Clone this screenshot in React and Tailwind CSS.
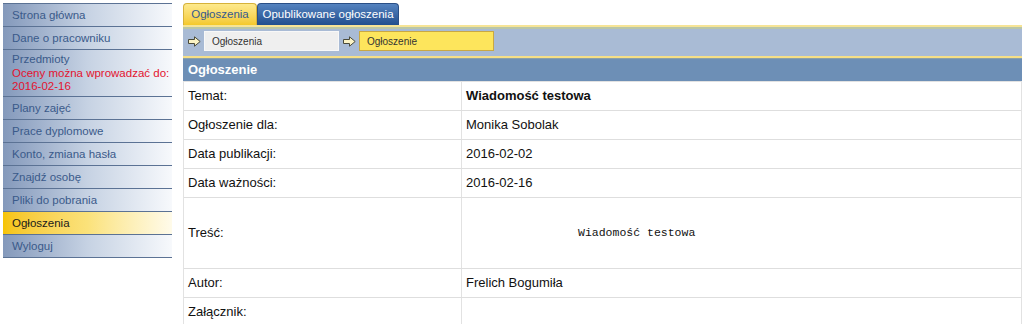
import React from "react";

const menu = [
  { label: "Strona główna" },
  { label: "Dane o pracowniku" },
  { label: "Przedmioty", extra: ["Oceny można wprowadzać do:", "2016-02-16"] },
  { label: "Plany zajęć" },
  { label: "Prace dyplomowe" },
  { label: "Konto, zmiana hasła" },
  { label: "Znajdź osobę" },
  { label: "Pliki do pobrania" },
  { label: "Ogłoszenia", active: true },
  { label: "Wyloguj" },
];

const rows = [
  { label: "Temat:", value: "Wiadomość testowa", bold: true },
  { label: "Ogłoszenie dla:", value: "Monika Sobolak" },
  { label: "Data publikacji:", value: "2016-02-02" },
  { label: "Data ważności:", value: "2016-02-16" },
  { label: "Treść:", value: "Wiadomość testowa", mono: true },
  { label: "Autor:", value: "Frelich Bogumiła" },
  { label: "Załącznik:", value: "" },
];

function Arrow() {
  return (
    <svg width="13" height="11" viewBox="0 0 13 11" className="shrink-0">
      <path
        d="M0.5 3.5 H6.5 V0.8 L12.2 5.5 L6.5 10.2 V7.5 H0.5 Z"
        fill="#fbf3c4"
        stroke="#4a4a3a"
        strokeWidth="1"
        strokeLinejoin="round"
      />
    </svg>
  );
}

export default function App() {
  return (
    <div className="flex w-[1024px] h-[324px] overflow-hidden bg-white font-['Liberation_Sans',Arial,sans-serif]">
      {/* sidebar */}
      <aside className="ml-[3px] mt-[3px] w-[169px] shrink-0 self-start border-t border-[#5b7294]">
        {menu.map((item) => (
          <div
            key={item.label}
            className={[
              "border-b border-[#5b7294] pl-[9px] text-[11.5px]",
              item.extra
                ? "h-[47px] pt-[3px] leading-[13.5px]"
                : "h-[23px] flex items-center leading-[14px]",
              item.active
                ? "bg-gradient-to-r from-[#f6c400] via-[#fbe27a] to-[#fffbea] text-[#1a1a1a]"
                : "bg-gradient-to-r from-[#8499bb] via-[#c6d2e3] to-[#f7f9fc] text-[#3a5a8a]",
            ].join(" ")}
          >
            <div>
              {item.label}
              {item.extra &&
                item.extra.map((t) => (
                  <div key={t} className="text-[#e3132f]">
                    {t}
                  </div>
                ))}
            </div>
          </div>
        ))}
      </aside>

      {/* main */}
      <main className="ml-[11px] mr-[2px] flex-1 pt-[3px]">
        {/* tabs */}
        <div className="flex h-[22px] items-end text-[11.5px]">
          <div className="h-[22px] w-[74px] rounded-t-[4px] border border-b-0 border-[#d6b23a] bg-gradient-to-b from-[#fde98c] to-[#f4c928] text-[#365a8e] flex items-center justify-center">
            Ogłoszenia
          </div>
          <div className="h-[22px] w-[142px] rounded-t-[4px] border border-b-0 border-[#2a4f86] bg-gradient-to-b from-[#5583bf] to-[#214f8e] text-white flex items-center justify-center">
            Opublikowane ogłoszenia
          </div>
        </div>

        {/* breadcrumb */}
        <div className="h-[2px] bg-[#f6e496]" />
        <div className="h-[2px] bg-[#b9c6a8]" />
        <div className="h-[27px] bg-[#a9bbd5] flex items-start pt-[2px] pl-[5px] text-[10px] text-[#333]">
          <div className="h-[20px] flex items-center">
            <Arrow />
          </div>
          <div className="ml-[3px] h-[20px] w-[135px] bg-[#efefef] border border-[#f8f8f8] flex items-center pl-[7px]">
            Ogłoszenia
          </div>
          <div className="ml-[4px] h-[20px] flex items-center">
            <Arrow />
          </div>
          <div className="ml-[3px] h-[20px] w-[135px] bg-[#fde55c] border border-[#c9a843] flex items-center pl-[7px]">
            Ogłoszenie
          </div>
        </div>
        <div className="h-[2px] bg-[#f6df86]" />
        <div className="h-[1px] bg-[#8aa0a8]" />
        <div className="h-[22px] bg-[#6d8fb6] flex items-center pl-[5px] text-[13px] font-bold text-white">
          Ogłoszenie
        </div>

        {/* table */}
        <div className="border-t border-l border-r border-[#e2e2e2] text-[13px] text-[#111]">
          {rows.map((r) => (
            <div
              key={r.label}
              className={[
                "flex border-b border-[#dedede]",
                r.mono ? "h-[71px]" : "h-[29px]",
              ].join(" ")}
            >
              <div className="w-[278px] shrink-0 border-r border-[#e2e2e2] flex items-center pl-[4px]">
                {r.label}
              </div>
              <div
                className={[
                  "flex-1 flex items-center pl-[4px]",
                  r.bold ? "font-bold" : "",
                  r.mono
                    ? "pl-[116px] text-[11.5px] font-['Liberation_Mono','Courier_New',monospace]"
                    : "",
                ].join(" ")}
              >
                {r.value}
              </div>
            </div>
          ))}
        </div>
      </main>
    </div>
  );
}
